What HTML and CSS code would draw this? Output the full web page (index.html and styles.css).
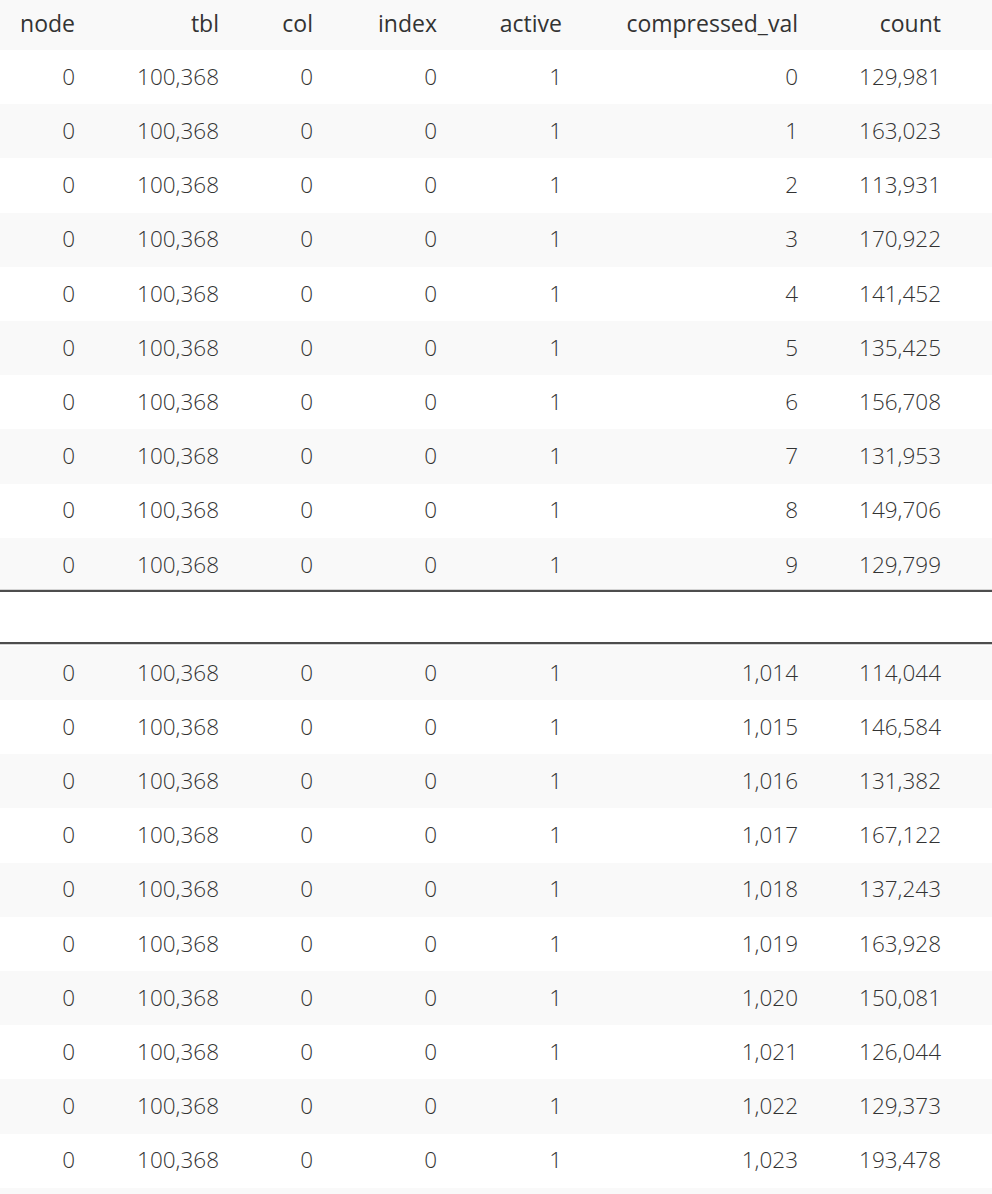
FILE: index.html
```html
<!DOCTYPE html>
<html>
<head>
<meta charset="utf-8">
<link rel="stylesheet" href="styles.css">
</head>
<body>
<div class="table">
  <div class="row head">
    <div class="cell">node</div><div class="cell">tbl</div><div class="cell">col</div><div class="cell">index</div><div class="cell">active</div><div class="cell">compressed_val</div><div class="cell">count</div><div class="cell"></div>
  </div>
  <div class="row"><div class="cell">0</div><div class="cell">100,368</div><div class="cell">0</div><div class="cell">0</div><div class="cell">1</div><div class="cell">0</div><div class="cell">129,981</div><div class="cell"></div></div>
  <div class="row alt"><div class="cell">0</div><div class="cell">100,368</div><div class="cell">0</div><div class="cell">0</div><div class="cell">1</div><div class="cell">1</div><div class="cell">163,023</div><div class="cell"></div></div>
  <div class="row"><div class="cell">0</div><div class="cell">100,368</div><div class="cell">0</div><div class="cell">0</div><div class="cell">1</div><div class="cell">2</div><div class="cell">113,931</div><div class="cell"></div></div>
  <div class="row alt"><div class="cell">0</div><div class="cell">100,368</div><div class="cell">0</div><div class="cell">0</div><div class="cell">1</div><div class="cell">3</div><div class="cell">170,922</div><div class="cell"></div></div>
  <div class="row"><div class="cell">0</div><div class="cell">100,368</div><div class="cell">0</div><div class="cell">0</div><div class="cell">1</div><div class="cell">4</div><div class="cell">141,452</div><div class="cell"></div></div>
  <div class="row alt"><div class="cell">0</div><div class="cell">100,368</div><div class="cell">0</div><div class="cell">0</div><div class="cell">1</div><div class="cell">5</div><div class="cell">135,425</div><div class="cell"></div></div>
  <div class="row"><div class="cell">0</div><div class="cell">100,368</div><div class="cell">0</div><div class="cell">0</div><div class="cell">1</div><div class="cell">6</div><div class="cell">156,708</div><div class="cell"></div></div>
  <div class="row alt"><div class="cell">0</div><div class="cell">100,368</div><div class="cell">0</div><div class="cell">0</div><div class="cell">1</div><div class="cell">7</div><div class="cell">131,953</div><div class="cell"></div></div>
  <div class="row"><div class="cell">0</div><div class="cell">100,368</div><div class="cell">0</div><div class="cell">0</div><div class="cell">1</div><div class="cell">8</div><div class="cell">149,706</div><div class="cell"></div></div>
  <div class="row alt"><div class="cell">0</div><div class="cell">100,368</div><div class="cell">0</div><div class="cell">0</div><div class="cell">1</div><div class="cell">9</div><div class="cell">129,799</div><div class="cell"></div></div>
  <div class="gap"></div>
  <div class="row alt"><div class="cell">0</div><div class="cell">100,368</div><div class="cell">0</div><div class="cell">0</div><div class="cell">1</div><div class="cell">1,014</div><div class="cell">114,044</div><div class="cell"></div></div>
  <div class="row"><div class="cell">0</div><div class="cell">100,368</div><div class="cell">0</div><div class="cell">0</div><div class="cell">1</div><div class="cell">1,015</div><div class="cell">146,584</div><div class="cell"></div></div>
  <div class="row alt"><div class="cell">0</div><div class="cell">100,368</div><div class="cell">0</div><div class="cell">0</div><div class="cell">1</div><div class="cell">1,016</div><div class="cell">131,382</div><div class="cell"></div></div>
  <div class="row"><div class="cell">0</div><div class="cell">100,368</div><div class="cell">0</div><div class="cell">0</div><div class="cell">1</div><div class="cell">1,017</div><div class="cell">167,122</div><div class="cell"></div></div>
  <div class="row alt"><div class="cell">0</div><div class="cell">100,368</div><div class="cell">0</div><div class="cell">0</div><div class="cell">1</div><div class="cell">1,018</div><div class="cell">137,243</div><div class="cell"></div></div>
  <div class="row"><div class="cell">0</div><div class="cell">100,368</div><div class="cell">0</div><div class="cell">0</div><div class="cell">1</div><div class="cell">1,019</div><div class="cell">163,928</div><div class="cell"></div></div>
  <div class="row alt"><div class="cell">0</div><div class="cell">100,368</div><div class="cell">0</div><div class="cell">0</div><div class="cell">1</div><div class="cell">1,020</div><div class="cell">150,081</div><div class="cell"></div></div>
  <div class="row"><div class="cell">0</div><div class="cell">100,368</div><div class="cell">0</div><div class="cell">0</div><div class="cell">1</div><div class="cell">1,021</div><div class="cell">126,044</div><div class="cell"></div></div>
  <div class="row alt"><div class="cell">0</div><div class="cell">100,368</div><div class="cell">0</div><div class="cell">0</div><div class="cell">1</div><div class="cell">1,022</div><div class="cell">129,373</div><div class="cell"></div></div>
  <div class="row"><div class="cell">0</div><div class="cell">100,368</div><div class="cell">0</div><div class="cell">0</div><div class="cell">1</div><div class="cell">1,023</div><div class="cell">193,478</div><div class="cell"></div></div>
  <div class="row alt"></div>
</div>
</body>
</html>
```

FILE: styles.css
```css
html, body {
  margin: 0;
  padding: 0;
  background: #ffffff;
}
body {
  font-family: "Open Sans", "Liberation Sans", sans-serif;
  color: #333333;
}
.table {
  width: 992px;
}
.row {
  display: grid;
  grid-template-columns: 75px 144px 94px 124px 125px 236px 143px 1fr;
  height: 54.2px;
  align-items: center;
  font-size: 22.5px;
  font-weight: 300;
  background: #ffffff;
}
.row.alt {
  background: #f9f9f9;
}
.row.head {
  height: 50px;
  background: #f9f9f9;
  font-size: 23px;
  font-weight: 400;
  padding-bottom: 4px;
  box-sizing: border-box;
}
.cell {
  text-align: right;
  white-space: nowrap;
  line-height: 1;
}
.gap {
  position: relative;
  margin-top: -2px;
  margin-bottom: 2px;
  height: 50px;
  border-top: 2px solid #4d4d4d;
  border-bottom: 2px solid #4d4d4d;
  background: #ffffff;
  box-shadow: 0 -1px 0 #d4d4d4, 0 1px 0 #d4d4d4;
}
```
